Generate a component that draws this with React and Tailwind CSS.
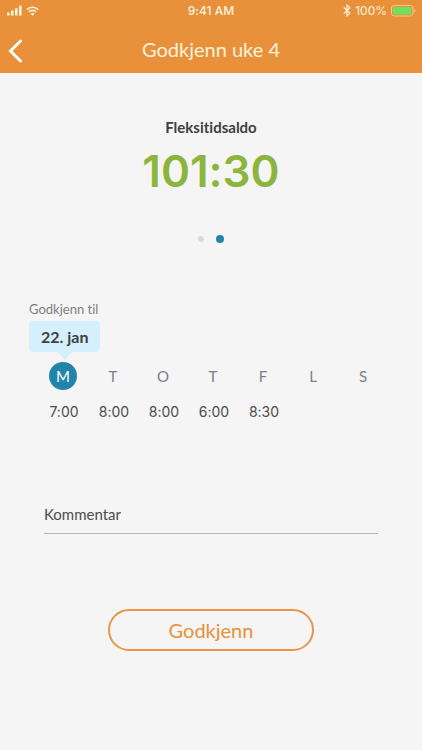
import { useState } from 'react'

const DAYS = [
  { id: 'mon', label: 'M', date: '22. jan', hours: '7:00' },
  { id: 'tue', label: 'T', date: '23. jan', hours: '8:00' },
  { id: 'wed', label: 'O', date: '24. jan', hours: '8:00' },
  { id: 'thu', label: 'T', date: '25. jan', hours: '6:00' },
  { id: 'fri', label: 'F', date: '26. jan', hours: '8:30' },
  { id: 'sat', label: 'L', date: '27. jan', hours: '' },
  { id: 'sun', label: 'S', date: '28. jan', hours: '' },
]

export default function App() {
  const [selected, setSelected] = useState('mon')
  const [comment, setComment] = useState('')

  const day = DAYS.find(d => d.id === selected)

  return (
    <div className="min-h-screen bg-[#f5f5f5] font-['Lato',sans-serif] text-[#3d4043] [font-variant-ligatures:none]">
      <header className="bg-[#e8913a] text-white">
        <StatusBar />
        <div className="grid h-[52px] grid-cols-[40px_1fr_40px] items-center pt-1">
          <button type="button" aria-label="Tilbake" className="flex h-10 items-center pt-1 pl-2">
            <BackIcon />
          </button>
          <h1 className="text-center text-[20px] leading-6 text-[#fff3dc]">Godkjenn uke 4</h1>
        </div>
      </header>

      <main>
        {/* ── Saldo ── */}
        <section className="flex flex-col items-center pt-11">
          <h2 className="text-[15px] leading-5 font-bold">Fleksitidsaldo</h2>
          <p className="mt-1 font-['Inter',sans-serif] text-[44px] leading-[60px] font-semibold text-[#8bb53c]">
            101:30
          </p>
          <div className="mt-7 flex h-5 items-center gap-3">
            <span className="size-1.5 rounded-full bg-[#d9d9d9]" />
            <span className="size-2 rounded-full bg-[#2384ab]" />
          </div>
        </section>

        {/* ── Uke ── */}
        <section className="mt-[50px]">
          <div className="flex flex-col items-start pl-[29px]">
            <p className="text-[13px] leading-5 text-[#7d7f81]">Godkjenn til</p>
            <div className="mt-0.5 flex flex-col items-center">
              <span className="rounded bg-[#d5f0fd] px-3 text-[16px] leading-[31px] font-bold">
                {day.date}
              </span>
              <svg width="14" height="8" viewBox="0 0 14 8" fill="#d5f0fd" aria-hidden="true">
                <path d="M0 0h14L7 8z" />
              </svg>
            </div>
          </div>

          <div className="mt-0.5 grid grid-cols-7 pl-[38px] pr-[34px]">
            {DAYS.map(d => (
              <DayColumn
                key={d.id}
                day={d}
                active={d.id === selected}
                onSelect={() => setSelected(d.id)}
              />
            ))}
          </div>
        </section>

        {/* ── Kommentar ── */}
        <section className="mt-[72px] px-11">
          <input
            type="text"
            aria-label="Kommentar"
            placeholder="Kommentar"
            value={comment}
            onChange={e => setComment(e.target.value)}
            className="h-10 w-full border-b border-[#b5b5b5] bg-transparent text-[15px] outline-none placeholder:text-[#4a4c4e]"
          />
        </section>

        <div className="flex justify-center pt-[75px] pb-10">
          <button
            type="button"
            className="h-[42px] w-[206px] rounded-full border-2 border-[#e8964a] text-[20px] leading-6 text-[#e8913a]"
          >
            Godkjenn
          </button>
        </div>
      </main>
    </div>
  )
}

function DayColumn({ day, active, onSelect }) {
  return (
    <div className="flex flex-col items-center">
      <button
        type="button"
        aria-pressed={active}
        onClick={onSelect}
        className={`size-7 rounded-full text-[15px] leading-5 ${active ? 'bg-[#2384ab] text-white' : 'text-[#7d7f81]'}`}
      >
        {day.label}
      </button>
      <span className="mt-3 h-5 pl-0.5 font-['Inter',sans-serif] text-[14px] leading-5 text-[#4a4c4e]">
        {day.hours}
      </span>
    </div>
  )
}

function StatusBar() {
  return (
    <div className="grid h-[21px] grid-cols-3 items-center px-1.5 font-['Inter',sans-serif] text-[12px] leading-4 text-[#fff3dc]">
      <div className="flex items-center gap-1">
        <svg width="16" height="11" viewBox="0 0 16 11" fill="currentColor" aria-hidden="true">
          <rect x="1" y="7.5" width="2.6" height="3" rx="0.6" />
          <rect x="5" y="5.5" width="2.6" height="5" rx="0.6" />
          <rect x="9" y="3.2" width="2.6" height="7.3" rx="0.6" />
          <rect x="13" y="0.5" width="2.6" height="10" rx="0.6" />
        </svg>
        <svg width="13" height="10" viewBox="0 0 13 10" fill="none" stroke="currentColor" strokeWidth="1.7" aria-hidden="true">
          <path d="M0.8 3.6a8.1 8.1 0 0 1 11.4 0M2.9 5.9a5.1 5.1 0 0 1 7.2 0" />
          <path d="M6.5 9.8L4.5 7.8a2.9 2.9 0 0 1 4 0z" fill="currentColor" stroke="none" />
        </svg>
      </div>
      <span className="text-center font-medium">9:41 AM</span>
      <div className="flex items-center justify-end gap-1">
        <svg width="8" height="13" viewBox="0 0 8 13" fill="none" stroke="currentColor" strokeWidth="1.2" aria-hidden="true">
          <path d="M0.8 3.5l6 5.6L4 11.9V1.1l2.8 2.8-6 5.6" />
        </svg>
        <span>100%</span>
        <svg width="25" height="12" viewBox="0 0 25 12" aria-hidden="true">
          <rect x="0.5" y="0.5" width="21.5" height="10.5" rx="2.5" fill="none" stroke="#f5c78f" />
          <rect x="2" y="2" width="18.5" height="7.5" rx="1" fill="#6ee25f" />
          <path d="M23.2 4v3.6q1.3-.5 1.3-1.8T23.2 4z" fill="#f5c78f" />
        </svg>
      </div>
    </div>
  )
}

function BackIcon() {
  return (
    <svg width="15" height="24" viewBox="0 0 15 24" fill="none" stroke="currentColor" strokeWidth="3" strokeLinecap="round" strokeLinejoin="miter" aria-hidden="true">
      <path d="M12.5 2L2.5 12l10 10" />
    </svg>
  )
}
